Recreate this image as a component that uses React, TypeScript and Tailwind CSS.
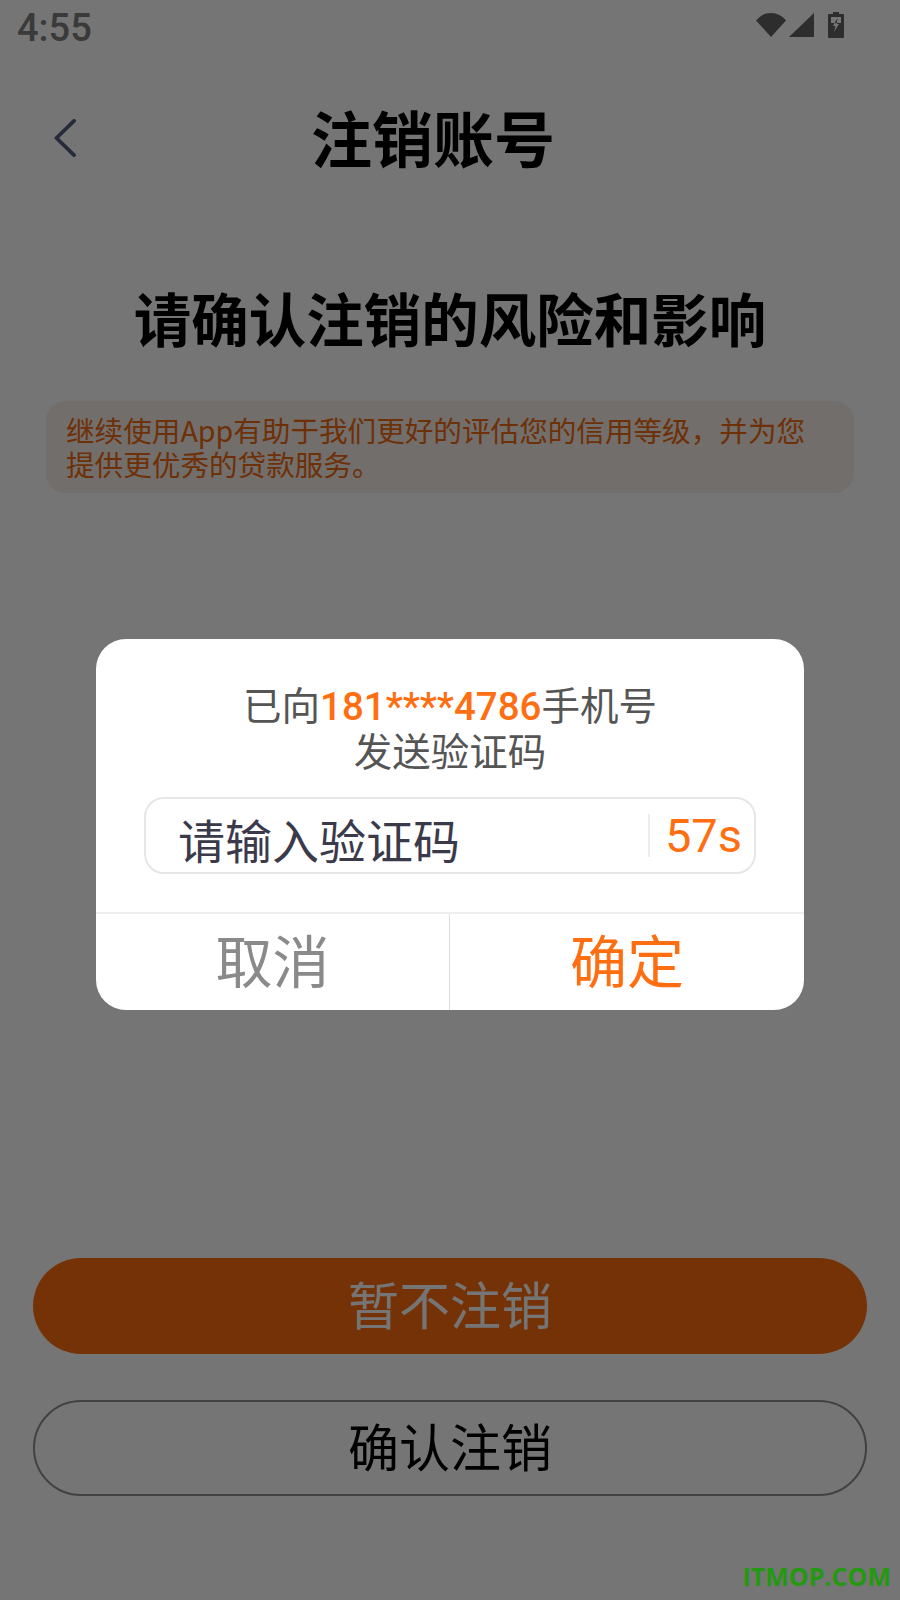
export default function App() {
  return (
    <div className="relative h-[1600px] w-[900px] overflow-hidden bg-white font-['Noto_Sans_CJK_SC',sans-serif]">
      <div className="flex h-[1600px] flex-col">
        {/* status bar */}
        <div className="flex h-[56px] items-center pl-[17px] pr-[56px]">
          <span className="font-['Roboto',sans-serif] text-[38px] font-medium leading-none text-[#7e7e7e]">4:55</span>
          <div className="ml-auto flex items-center pb-[6px] text-[#626262]">
            <svg width="30" height="24" viewBox="0 0 30 24" className="mr-[3px] fill-current">
              <path d="M0 7.5C4 2.8 9 0 15 0s11 2.8 15 7.5L15 24Z" />
            </svg>
            <svg width="25" height="24" viewBox="0 0 25 24" className="mr-[14px] fill-current">
              <path d="M25 0V24H0Z" />
            </svg>
            <svg width="16" height="26" viewBox="0 0 16 26" className="fill-current">
              <path fillRule="evenodd" d="M5 0h6v2h4a1 1 0 0 1 1 1v22a1 1 0 0 1-1 1H1a1 1 0 0 1-1-1V3a1 1 0 0 1 1-1h4ZM3 5v6h10V5ZM9.5 6 5 14h2.5L6 20l5-8H8.5Z" />
            </svg>
          </div>
        </div>

        {/* nav */}
        <div className="mt-[41px] flex h-[80px] items-center pl-[53px]">
          <svg width="24" height="38" viewBox="0 0 24 40" fill="none" className="mt-[2px] stroke-[#525f82]">
            <path d="M21.5 2 3 20l18.5 18" strokeWidth="4" strokeLinecap="round" strokeLinejoin="round" />
          </svg>
          <h1 className="ml-[234px] text-[61px] font-bold leading-[80px] text-black">注销账号</h1>
        </div>

        <h2 className="mt-[100px] text-center text-[57.5px] font-bold leading-[80px] text-black">请确认注销的风险和影响</h2>

        <div className="mx-[46px] mt-[44px] h-[92px] rounded-[20px] bg-[#f8efe9] px-[20px] py-[12px] text-[28.6px] leading-[34px] text-[#f06a10]">
          继续使用App有助于我们更好的评估您的信用等级，并为您
          <br />
          提供更优秀的贷款服务。
        </div>

        {/* bottom buttons */}
        <div className="mt-auto flex flex-col gap-[46px] px-[33px] pb-[104px]">
          <div className="flex h-[96px] items-center justify-center rounded-full bg-[#ff6d10] pb-[5px] text-[51px] text-white">暂不注销</div>
          <div className="flex h-[96px] items-center justify-center rounded-full border-2 border-[#8f8f8f] pb-[5px] text-[51px] text-black">确认注销</div>
        </div>
      </div>

      {/* overlay + dialog */}
      <div className="absolute inset-0 flex justify-center bg-black/54 pt-[639px]">
        <div className="h-[371px] w-[708px] overflow-hidden rounded-[30px] bg-white">
          <div className="mt-[43px] text-center text-[38.5px] leading-[43px] text-[#555555]">
            <div>
              已向<span className="font-['Roboto',sans-serif] font-medium text-[#ff6e10]">181****4786</span>手机号
            </div>
            <div>发送验证码</div>
          </div>

          <div className="mx-[48px] mt-[26px] flex h-[77px] items-center rounded-[20px] border-2 border-[#e6e6e6]">
            <span className="mt-[5px] pl-[32px] text-[47px] leading-none text-[#3a3a4a]">请输入验证码</span>
            <div className="ml-auto h-[43px] w-[2px] bg-[#eeeeee]" />
            <span className="ml-[15px] pr-[12px] font-['Roboto',sans-serif] text-[47px] leading-none text-[#ff6e10]">57s</span>
          </div>

          <div className="mt-[38px] flex h-[101px] border-t-2 border-[#eeeeee] text-[57px] leading-none">
            <div className="flex w-[354px] items-center justify-center border-r border-[#dddddd] pb-[11px] text-[#8a8a8a]">取消</div>
            <div className="flex flex-1 items-center justify-center pb-[11px] text-[#ff6e10]">确定</div>
          </div>
        </div>
      </div>

      <span className="absolute right-[9px] top-[1558px] font-['Open_Sans',sans-serif] text-[25px] font-bold leading-[36px] text-[#23990f]">ITMOP.COM</span>
    </div>
  )
}
